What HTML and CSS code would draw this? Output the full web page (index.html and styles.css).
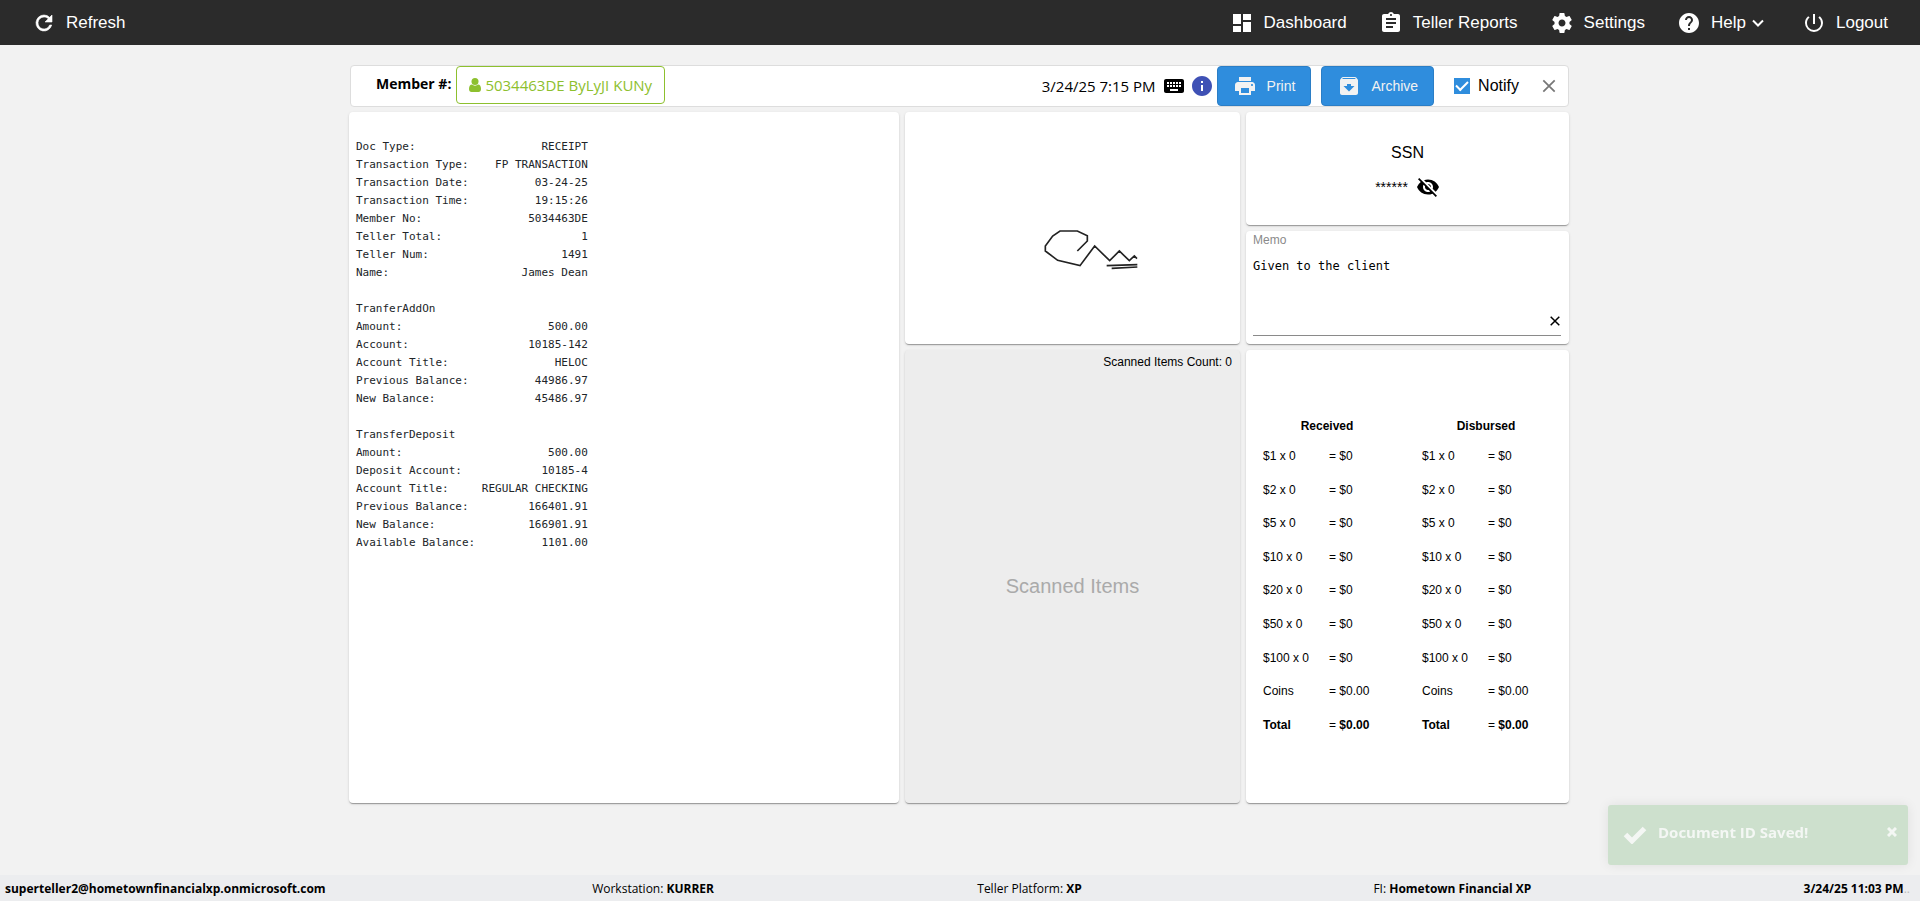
FILE: index.html
```html
<!DOCTYPE html>
<html lang="en">
<head>
<meta charset="utf-8">
<meta name="viewport" content="width=device-width, initial-scale=1">
<title>Receipt</title>
<link rel="stylesheet" href="styles.css">
</head>
<body>
<header class="topbar">
  <a class="nav-item" href="#refresh">
    <svg class="icon" viewBox="0 0 24 24"><path d="M17.65 6.35A7.96 7.96 0 0 0 12 4a8 8 0 1 0 7.73 10h-2.08A6 6 0 1 1 12 6c1.66 0 3.14.69 4.22 1.78L13 11h7V4z" stroke="currentColor" stroke-width=".6"/></svg>
    <span>Refresh</span>
  </a>
  <nav class="nav">
    <a class="nav-item" href="#dashboard">
      <svg class="icon" viewBox="0 0 24 24"><path d="M3 13h8V3H3zm0 8h8v-6H3zm10 0h8V11h-8zm0-18v6h8V3z"/></svg>
      <span>Dashboard</span>
    </a>
    <a class="nav-item" href="#reports">
      <svg class="icon" viewBox="0 0 24 24"><path d="M19 3h-4.18C14.4 1.84 13.3 1 12 1s-2.4.84-2.82 2H5c-1.1 0-2 .9-2 2v14c0 1.1.9 2 2 2h14c1.1 0 2-.9 2-2V5c0-1.1-.9-2-2-2zm-7 0c.55 0 1 .45 1 1s-.45 1-1 1-1-.45-1-1 .45-1 1-1zm2 14H7v-2h7zm3-4H7v-2h10zm0-4H7V7h10z"/></svg>
      <span>Teller Reports</span>
    </a>
    <a class="nav-item" href="#settings">
      <svg class="icon" viewBox="0 0 24 24"><path d="M19.43 12.98c.04-.32.07-.64.07-.98s-.03-.66-.07-.98l2.11-1.65c.19-.15.24-.42.12-.64l-2-3.46c-.12-.22-.39-.3-.61-.22l-2.49 1c-.52-.4-1.08-.73-1.69-.98l-.38-2.65A.49.49 0 0 0 14 2h-4c-.25 0-.46.18-.49.42l-.38 2.65c-.61.25-1.17.59-1.69.98l-2.49-1c-.23-.09-.49 0-.61.22l-2 3.46c-.13.22-.07.49.12.64l2.11 1.65c-.04.32-.07.65-.07.98s.03.66.07.98l-2.11 1.65c-.19.15-.24.42-.12.64l2 3.46c.12.22.39.3.61.22l2.49-1c.52.4 1.08.73 1.69.98l.38 2.65c.03.24.24.42.49.42h4c.25 0 .46-.18.49-.42l.38-2.65c.61-.25 1.17-.59 1.69-.98l2.49 1c.23.09.49 0 .61-.22l2-3.46c.12-.22.07-.49-.12-.64zM12 15.5c-1.93 0-3.5-1.57-3.5-3.5s1.57-3.5 3.5-3.5 3.5 1.57 3.5 3.5-1.57 3.5-3.5 3.5z"/></svg>
      <span>Settings</span>
    </a>
    <a class="nav-item" href="#help">
      <svg class="icon" viewBox="0 0 24 24"><path d="M12 2C6.48 2 2 6.48 2 12s4.48 10 10 10 10-4.48 10-10S17.52 2 12 2zm1 17h-2v-2h2zm2.07-7.75-.9.92C13.45 12.9 13 13.5 13 15h-2v-.5c0-1.1.45-2.1 1.17-2.83l1.24-1.26c.37-.36.59-.86.59-1.41 0-1.1-.9-2-2-2s-2 .9-2 2H8c0-2.21 1.79-4 4-4s4 1.79 4 4c0 .88-.36 1.68-.93 2.25z"/></svg>
      <span>Help</span>
      <svg class="icon chevron" viewBox="0 0 24 24"><path d="M7 9.5l5 5 5-5"/></svg>
    </a>
    <a class="nav-item" href="#logout">
      <svg class="icon" viewBox="0 0 24 24"><path d="M13 3h-2v10h2zm4.83 2.17-1.42 1.42A6.92 6.92 0 0 1 19 12c0 3.87-3.13 7-7 7s-7-3.13-7-7c0-2.19 1.01-4.14 2.58-5.42L6.17 5.17A8.93 8.93 0 0 0 3 12a9 9 0 0 0 18 0c0-2.74-1.23-5.18-3.17-6.83z"/></svg>
      <span>Logout</span>
    </a>
  </nav>
</header>

<main class="page">
  <section class="member-bar">
    <span class="member-label">Member #:</span>
    <button class="member-button" type="button">
      <svg class="person" viewBox="0 0 12 14"><circle cx="6" cy="3.5" r="3.5"/><path d="M3 6.5C1 6.5 0 8.500 0 11c0 2 1 3 2.500 3h7c1.500 0 2.500-1 2.500-3 0-2.500-1-4.500-3-4.500-.8.7-1.800 1.200-3 1.200s-2.200-.5-3-1.200z"/></svg>
      <span>5034463DE ByLyJI KUNy</span>
    </button>
    <time class="stamp">3/24/25 7:15 PM</time>
    <svg class="icon keyboard" viewBox="0 0 24 24"><path d="M20 5H4c-1.1 0-2 .9-2 2v10c0 1.1.9 2 2 2h16c1.1 0 2-.9 2-2V7c0-1.1-.9-2-2-2zm-9 3h2v2h-2zm0 3h2v2h-2zM8 8h2v2H8zm0 3h2v2H8zm-1 2H5v-2h2zm0-3H5V8h2zm9 7H8v-2h8zm0-4h-2v-2h2zm0-3h-2V8h2zm3 3h-2v-2h2zm0-3h-2V8h2z"/></svg>
    <svg class="icon info" viewBox="0 0 24 24"><path d="M12 2C6.48 2 2 6.48 2 12s4.48 10 10 10 10-4.48 10-10S17.52 2 12 2zm1 15h-2v-6h2zm0-8h-2V7h2z"/></svg>
    <button class="action" type="button">
      <svg class="icon" viewBox="0 0 24 24"><path d="M19 8H5c-1.66 0-3 1.34-3 3v6h4v4h12v-4h4v-6c0-1.66-1.34-3-3-3zm-3 11H8v-5h8zm3-7c-.55 0-1-.45-1-1s.45-1 1-1 1 .45 1 1-.45 1-1 1zm-1-9H6v4h12z"/></svg>
      <span>Print</span>
    </button>
    <button class="action archive" type="button">
      <svg class="icon" viewBox="0 0 24 24"><path d="M20.54 5.23l-1.39-1.68C18.88 3.21 18.47 3 18 3H6c-.47 0-.88.21-1.16.55L3.46 5.23C3.17 5.57 3 6.02 3 6.5V19c0 1.1.9 2 2 2h14c1.1 0 2-.9 2-2V6.5c0-.48-.17-.93-.46-1.27zM12 17.5L6.5 12H10v-2h4v2h3.5zM5.12 5l.81-1h12l.94 1z"/></svg>
      <span>Archive</span>
    </button>
    <label class="notify"><input class="check" type="checkbox" checked><span>Notify</span></label>
    <button class="close" type="button" aria-label="Close">
      <svg class="close-icon" viewBox="0 0 16 16"><path d="M1.5 1.5l13 13M14.5 1.5l-13 13"/></svg>
    </button>
  </section>

  <div class="panels">
    <section class="card receipt">
      <dl class="lines">
        <div class="line"><dt>Doc Type:</dt><dd>RECEIPT</dd></div>
        <div class="line"><dt>Transaction Type:</dt><dd>FP TRANSACTION</dd></div>
        <div class="line"><dt>Transaction Date:</dt><dd>03-24-25</dd></div>
        <div class="line"><dt>Transaction Time:</dt><dd>19:15:26</dd></div>
        <div class="line"><dt>Member No:</dt><dd>5034463DE</dd></div>
        <div class="line"><dt>Teller Total:</dt><dd>1</dd></div>
        <div class="line"><dt>Teller Num:</dt><dd>1491</dd></div>
        <div class="line"><dt>Name:</dt><dd>James Dean</dd></div>
      </dl>
      <h2 class="lines-title">TranferAddOn</h2>
      <dl class="lines">
        <div class="line"><dt>Amount:</dt><dd>500.00</dd></div>
        <div class="line"><dt>Account:</dt><dd>10185-142</dd></div>
        <div class="line"><dt>Account Title:</dt><dd>HELOC</dd></div>
        <div class="line"><dt>Previous Balance:</dt><dd>44986.97</dd></div>
        <div class="line"><dt>New Balance:</dt><dd>45486.97</dd></div>
      </dl>
      <h2 class="lines-title">TransferDeposit</h2>
      <dl class="lines">
        <div class="line"><dt>Amount:</dt><dd>500.00</dd></div>
        <div class="line"><dt>Deposit Account:</dt><dd>10185-4</dd></div>
        <div class="line"><dt>Account Title:</dt><dd>REGULAR CHECKING</dd></div>
        <div class="line"><dt>Previous Balance:</dt><dd>166401.91</dd></div>
        <div class="line"><dt>New Balance:</dt><dd>166901.91</dd></div>
        <div class="line"><dt>Available Balance:</dt><dd>1101.00</dd></div>
      </dl>
    </section>

    <section class="card signature">
      <svg class="signature-drawing" viewBox="15 -264 1005 696" role="img" aria-label="Signature">
        <path d="M532 153L562 123V107L532 93H480L458 108 436 138V153L473 181 540 197 584 138 629 182 658 153 688 182 703 168 711 176M620 197L712 194M635 205L712 201"/>
      </svg>
    </section>

    <section class="card ssn">
      <h2 class="ssn-title">SSN</h2>
      <div class="ssn-value">
        <span>******</span>
        <button class="reveal" type="button" aria-label="Show SSN">
          <svg class="icon" viewBox="0 0 24 24"><path d="M12 7c2.76 0 5 2.24 5 5 0 .65-.13 1.26-.36 1.83l2.92 2.92c1.51-1.26 2.7-2.89 3.43-4.75-1.73-4.39-6-7.5-11-7.5-1.4 0-2.74.25-3.98.7l2.16 2.16C10.74 7.13 11.35 7 12 7zM2 4.27l2.28 2.28.46.46A11.8 11.8 0 0 0 1 12c1.73 4.39 6 7.5 11 7.5 1.55 0 3.03-.3 4.38-.84l.42.42L19.73 22 21 20.73 3.27 3zM7.53 9.8l1.55 1.55c-.05.21-.08.43-.08.65 0 1.66 1.34 3 3 3 .22 0 .44-.03.65-.08l1.55 1.55c-.67.33-1.41.53-2.2.53-2.76 0-5-2.24-5-5 0-.79.2-1.53.53-2.2zm4.31-.78l3.15 3.15.02-.16c0-1.66-1.34-3-3-3z"/></svg>
        </button>
      </div>
    </section>

    <section class="card memo">
      <label class="memo-label" for="memo">Memo</label>
      <div class="memo-field">
        <textarea class="memo-text" id="memo" rows="3">Given to the client</textarea>
        <button class="memo-clear" type="button" aria-label="Clear memo">
          <svg class="clear-icon" viewBox="0 0 10 10"><path d="M.7.7l8.600 8.600M9.300.7L.7 9.300"/></svg>
        </button>
      </div>
    </section>

    <section class="card scanned">
      <div class="scanned-count">Scanned Items Count: 0</div>
      <div class="scanned-empty">Scanned Items</div>
    </section>

    <section class="card cash">
      <table class="cash-table">
        <thead><tr><th colspan="2">Received</th></tr></thead>
        <tbody>
          <tr><td>$1 x 0</td><td>= $0</td></tr>
          <tr><td>$2 x 0</td><td>= $0</td></tr>
          <tr><td>$5 x 0</td><td>= $0</td></tr>
          <tr><td>$10 x 0</td><td>= $0</td></tr>
          <tr><td>$20 x 0</td><td>= $0</td></tr>
          <tr><td>$50 x 0</td><td>= $0</td></tr>
          <tr><td>$100 x 0</td><td>= $0</td></tr>
          <tr><td>Coins</td><td>= $0.00</td></tr>
          <tr><td><b>Total</b></td><td>= <b>$0.00</b></td></tr>
        </tbody>
      </table>
      <table class="cash-table">
        <thead><tr><th colspan="2">Disbursed</th></tr></thead>
        <tbody>
          <tr><td>$1 x 0</td><td>= $0</td></tr>
          <tr><td>$2 x 0</td><td>= $0</td></tr>
          <tr><td>$5 x 0</td><td>= $0</td></tr>
          <tr><td>$10 x 0</td><td>= $0</td></tr>
          <tr><td>$20 x 0</td><td>= $0</td></tr>
          <tr><td>$50 x 0</td><td>= $0</td></tr>
          <tr><td>$100 x 0</td><td>= $0</td></tr>
          <tr><td>Coins</td><td>= $0.00</td></tr>
          <tr><td><b>Total</b></td><td>= <b>$0.00</b></td></tr>
        </tbody>
      </table>
    </section>
  </div>
</main>

<footer class="statusbar">
  <b>superteller2@hometownfinancialxp.onmicrosoft.com</b>
  <span>Workstation: <b>KURRER</b></span>
  <span>Teller Platform: <b>XP</b></span>
  <span>FI: <b>Hometown Financial XP</b></span>
  <span><b>3/24/25 11:03 PM</b><span class="faint">..</span></span>
</footer>

<div class="toast" role="status">
  <svg class="toast-check" viewBox="0 0 24 18"><path d="M2.5 8.500l6.500 6.500L21.500 2.500"/></svg>
  <span class="toast-text">Document ID Saved!</span>
  <button class="toast-close" type="button" aria-label="Dismiss">
    <svg class="clear-icon" viewBox="0 0 10 10"><path d="M1 1l8 8M9 1l-8 8"/></svg>
  </button>
</div>
</body>
</html>
```

FILE: styles.css
```css
* {
  box-sizing: border-box;
}

body {
  margin: 0;
  min-height: 100vh;
  display: flex;
  flex-direction: column;
  background: #f2f2f2;
  color: #000;
  font-family: "Liberation Sans", Arial, sans-serif;
  font-size: 12px;
}

button {
  font-family: inherit;
  border: 0;
  padding: 0;
  background: none;
  cursor: pointer;
}

svg {
  display: block;
  flex: none;
}

h2,
dl,
dd {
  margin: 0;
  font-size: inherit;
  font-weight: normal;
}

.icon {
  width: 24px;
  height: 24px;
  fill: currentColor;
}

/* Top bar */
.topbar {
  display: flex;
  justify-content: space-between;
  align-items: center;
  height: 45px;
  padding: 0 32px;
  background: #2b2b2b;
}

.nav {
  display: flex;
  gap: 32px;
}

.nav-item {
  display: flex;
  align-items: center;
  gap: 10px;
  color: #fff;
  font-size: 17px;
  line-height: 24px;
  text-decoration: none;
}

.nav-item .chevron {
  margin-left: -10px;
  fill: none;
  stroke: currentColor;
  stroke-width: 2;
}

/* Page */
.page {
  flex: 1;
  display: flex;
  flex-direction: column;
  gap: 5px;
  width: 100%;
  max-width: 1222px;
  margin: 0 auto;
  padding: 20px 2px 72px 0;
}

.member-bar {
  display: flex;
  align-items: center;
  height: 42px;
  margin-left: 1px;
  padding: 0 12px 0 25px;
  border: 1px solid #ddd;
  border-radius: 4px;
  background: #fff;
  font-family: "Open Sans", sans-serif;
  font-size: 15px;
}

.member-label {
  margin-bottom: 6px;
  font-size: 14px;
  font-weight: 700;
}

.member-button {
  display: flex;
  align-items: center;
  align-self: flex-start;
  gap: 4px;
  height: 38px;
  margin-left: 5px;
  padding: 0 12px;
  border: 1px solid #8dc02e;
  border-radius: 4px;
  color: #8dc02e;
  font-size: 15px;
}

.person {
  width: 12px;
  height: 14px;
  fill: currentColor;
}

.stamp {
  margin-left: auto;
}

.keyboard {
  margin: 0 2px 0 6px;
}

.info {
  margin: 0 3px 0 2px;
  color: #3f51b5;
}

.action {
  display: flex;
  align-items: center;
  gap: 10px;
  height: 40px;
  padding: 0 15px;
  border: 1px solid #2b7ec6;
  border-radius: 4px;
  background: #2f8ddd;
  color: #f2f2f2;
  font-family: "Liberation Sans", Arial, sans-serif;
  font-size: 14px;
}

.archive {
  margin-left: 10px;
}

.notify {
  display: flex;
  align-items: center;
  gap: 8px;
  margin: 0 23px 0 20px;
  font-family: "Liberation Sans", Arial, sans-serif;
  font-size: 16px;
}

.check {
  appearance: none;
  width: 16px;
  height: 16px;
  margin: 0;
  border: 1px solid #2f8ddd;
}

.check:checked {
  display: grid;
  place-items: center;
  background: #2f8ddd;
}

.check:checked::before {
  content: "";
  width: 10px;
  height: 5px;
  margin-bottom: 4px;
  border: solid #fff;
  border-width: 0 0 2px 2px;
  rotate: -45deg;
}

.close-icon {
  width: 14px;
  height: 14px;
  stroke: #777;
  stroke-width: 2;
}

/* Panels */
.panels {
  flex: 1;
  display: grid;
  grid-template-columns: 550fr 335fr 323fr;
  grid-template-rows: 113fr 113fr 453fr;
  gap: 6px;
}

.card {
  border-radius: 4px;
  background: #fff;
  box-shadow: 0 2px 1px -1px rgba(0, 0, 0, 0.2), 0 1px 1px rgba(0, 0, 0, 0.14), 0 1px 3px rgba(0, 0, 0, 0.12);
}

.receipt {
  grid-row: 1 / 4;
  padding: 26px 7px;
  color: #212529;
  font-family: "DejaVu Sans Mono", monospace;
  font-size: 11px;
  line-height: 18px;
}

.lines {
  width: 35ch;
}

.line {
  display: flex;
  justify-content: space-between;
}

.lines-title {
  margin-top: 18px;
}

.signature {
  grid-row: 1 / 3;
  grid-column: 2;
}

.signature-drawing {
  width: 100%;
  height: 100%;
  fill: none;
  stroke: #222;
  stroke-width: 5;
}

.ssn {
  display: flex;
  flex-direction: column;
  align-items: center;
  justify-content: center;
  gap: 12px;
  padding-top: 4px;
}

.ssn-title {
  font-size: 16px;
  line-height: 20px;
}

.ssn-value {
  display: flex;
  align-items: center;
  gap: 8px;
  font-size: 14px;
}

.memo {
  grid-column: 3;
  display: flex;
  flex-direction: column;
  padding: 1px 8px 8px 7px;
}

.memo-label {
  color: #8a8a8a;
  line-height: 16px;
}

.memo-field {
  flex: 1;
  display: flex;
  align-items: flex-end;
  border-bottom: 1px solid #8a8a8a;
}

.memo-text {
  flex: 1;
  min-width: 0;
  height: 100%;
  padding: 10px 0 0;
  border: 0;
  outline: 0;
  resize: none;
  color: #000;
  font-family: "DejaVu Sans Mono", monospace;
  font-size: 12px;
  line-height: 16px;
}

.memo-clear {
  padding: 0 1px 9px 0;
}

.clear-icon {
  width: 10px;
  height: 10px;
  fill: none;
  stroke: #000;
  stroke-width: 1.5;
}

.scanned {
  grid-column: 2;
  display: flex;
  flex-direction: column;
  background: #ededed;
}

.scanned-count {
  padding: 4px 8px 0;
  line-height: 16px;
  text-align: right;
}

.scanned-empty {
  flex: 1;
  display: flex;
  align-items: center;
  justify-content: center;
  color: #aaa;
  font-size: 20px;
}

.cash {
  display: flex;
  align-items: center;
  justify-content: center;
  gap: 31px;
  padding-right: 2px;
}

.cash-table {
  width: 128px;
  height: 330px;
  border-collapse: collapse;
}

.cash-table th,
.cash-table td {
  padding: 0;
  text-align: left;
}

.cash-table th {
  height: 28px;
  text-align: center;
}

.cash-table td:first-child {
  width: 66px;
}

/* Status bar */
.statusbar {
  display: grid;
  grid-template-columns: 587fr 385fr 396fr 430fr auto;
  align-items: center;
  height: 26px;
  padding: 0 10px 0 5px;
  background: #ecedef;
  font-family: "Open Sans", sans-serif;
  font-size: 12px;
  white-space: nowrap;
}

.faint {
  color: #bbb;
}

/* Toast */
.toast {
  position: fixed;
  right: 12px;
  bottom: 36px;
  display: flex;
  align-items: center;
  gap: 11px;
  width: 300px;
  height: 60px;
  padding: 0 11px 0 15px;
  border-radius: 3px;
  background: #cde0cd;
  box-shadow: 0 0 12px rgba(0, 0, 0, 0.08);
  color: #f4f7f4;
  font-family: "Open Sans", sans-serif;
  font-size: 15px;
  font-weight: 700;
}

.toast-check {
  width: 24px;
  height: 18px;
  fill: none;
  stroke: currentColor;
  stroke-width: 5;
}

.toast-text {
  margin-bottom: 6px;
}

.toast-close {
  margin: 0 0 6px auto;
}

.toast-close .clear-icon {
  stroke: #f4f7f4;
  stroke-width: 3;
}
```
